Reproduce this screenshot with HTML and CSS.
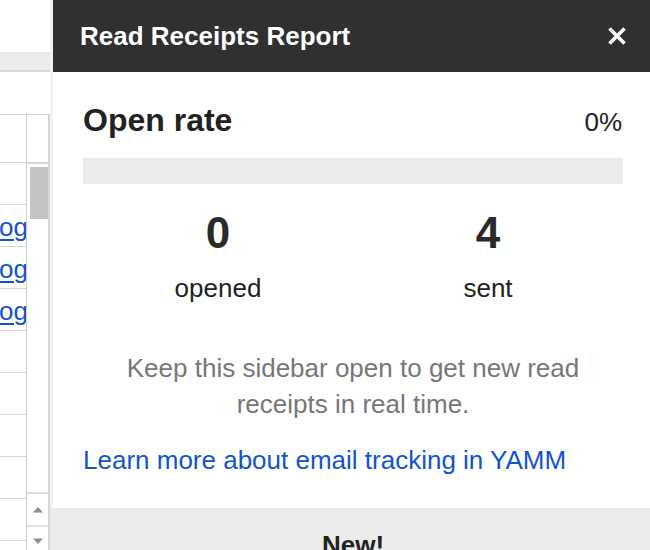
FILE: index.html
```html
<!DOCTYPE html>
<html>
<head>
<meta charset="utf-8">
<title>Read Receipts Report</title>
<link rel="stylesheet" href="styles.css">
</head>
<body>
<div class="page">
  <div class="sheet">
    <div class="toolbar"></div>
    <div class="dots"></div>
    <div class="formula"></div>
    <div class="colhead"></div>
    <div class="grid">
      <div class="cells">
        <div class="cell head"></div>
        <div class="cell"></div>
        <div class="cell"><a class="link" href="#">og</a></div>
        <div class="cell"><a class="link" href="#">og</a></div>
        <div class="cell"><a class="link" href="#">og</a></div>
        <div class="cell"></div>
        <div class="cell"></div>
        <div class="cell"></div>
        <div class="cell"></div>
        <div class="cell"></div>
        <div class="cell"></div>
      </div>
      <div class="vscroll">
        <div class="vs-head"></div>
        <div class="vs-track"><div class="vs-thumb"></div></div>
        <div class="vs-btn up">
          <svg width="12" height="7" viewBox="0 0 12 7"><path d="M1 6.5 L6 1 L11 6.5 Z" fill="#8e8e8e"/></svg>
        </div>
        <div class="vs-btn down">
          <svg width="12" height="7" viewBox="0 0 12 7"><path d="M1 0.5 L6 6 L11 0.5 Z" fill="#8e8e8e"/></svg>
        </div>
      </div>
    </div>
  </div>

  <div class="sidebar">
    <div class="sb-header">
      <div class="sb-title">Read Receipts Report</div>
      <svg class="close" width="20" height="20" viewBox="0 0 20 20">
        <path d="M2.5 2.5 L17.5 17.5 M17.5 2.5 L2.5 17.5" stroke="#ffffff" stroke-width="3.6" fill="none"/>
      </svg>
    </div>
    <div class="sb-body">
      <div class="rate-row">
        <div class="rate-label">Open rate</div>
        <div class="rate-value">0%</div>
      </div>
      <div class="bar"><div class="bar-fill" style="width:0%"></div></div>
      <div class="stats">
        <div class="stat">
          <div class="stat-num">0</div>
          <div class="stat-label">opened</div>
        </div>
        <div class="stat">
          <div class="stat-num">4</div>
          <div class="stat-label">sent</div>
        </div>
      </div>
      <p class="hint">Keep this sidebar open to get new read receipts in real time.</p>
      <a class="learn" href="#">Learn more about email tracking in YAMM</a>
    </div>
    <div class="sb-footer">
      <div class="new">New!</div>
    </div>
  </div>
</div>
</body>
</html>
```

FILE: styles.css
```css
html, body {
  margin: 0;
  padding: 0;
  background: #ffffff;
}

body {
  font-family: "Liberation Sans", Arial, Helvetica, sans-serif;
  color: #222222;
  width: 650px;
  height: 550px;
  overflow: hidden;
}

.page {
  display: flex;
  width: 650px;
  height: 550px;
  overflow: hidden;
}

/* ---------- spreadsheet fragment ---------- */
.sheet {
  width: 50px;
  flex: none;
  display: flex;
  flex-direction: column;
  height: 550px;
  overflow: hidden;
}

.sheet > div {
  flex: none;
}

.toolbar {
  height: 52px;
  background: #ffffff;
}

.dots {
  height: 5px;
  background-color: #ffffff;
  background-image: repeating-conic-gradient(#dcdcdc 0 25%, #f4f4f4 0 50%);
  background-size: 2px 2px;
}

.formula {
  height: 13px;
  background: #ececec;
  border-bottom: 2px solid #d8d8d8;
}

.colhead {
  height: 42px;
  border-bottom: 1px solid #d0d0d0;
}

.grid {
  display: flex;
  align-items: flex-start;
  height: 435px;
  overflow: hidden;
}

.cells {
  width: 26px;
  flex: none;
  border-right: 1px solid #d0d0d0;
  display: flex;
  flex-direction: column;
}

.cell {
  flex: none;
  box-sizing: border-box;
  height: 42px;
  border-bottom: 1px solid #d6d6d6;
  overflow: hidden;
  white-space: nowrap;
  padding-top: 9px;
  font-size: 26px;
  line-height: 26px;
}

.cell.head {
  height: 48px;
}

.link {
  color: #1155cc;
  text-decoration: underline;
  text-decoration-thickness: 2px;
  text-underline-offset: 3px;
  margin-left: -1px;
}

.vscroll {
  width: 21px;
  flex: none;
  border-right: 2px solid #d6d6d6;
  display: flex;
  flex-direction: column;
}

.vscroll > div {
  flex: none;
}

.vs-head {
  height: 47px;
  border-bottom: 1px solid #d0d0d0;
}

.vs-track {
  height: 331px;
  padding-top: 3px;
  box-sizing: border-box;
  border-top: 1px solid #d9d9d9;
  border-bottom: 2px solid #dcdcdc;
}

.vs-thumb {
  width: 18px;
  height: 52px;
  margin-left: 3px;
  background: #c4c4c4;
}

.vs-btn {
  display: flex;
  align-items: center;
  justify-content: center;
}

.vs-btn.up {
  height: 31px;
  border-bottom: 2px solid #e2e2e2;
}

.vs-btn.down {
  height: 28px;
  align-items: flex-start;
  padding-top: 11px;
  box-sizing: border-box;
}

/* ---------- sidebar ---------- */
.sidebar {
  width: 600px;
  flex: none;
  display: flex;
  flex-direction: column;
  background: #f2f2f2;
  height: 550px;
}

.sb-header {
  margin-left: 3px;
  height: 72px;
  background: #303030;
  display: flex;
  align-items: center;
  justify-content: space-between;
  padding: 0 23px 0 27px;
  flex: none;
}

.sb-title {
  color: #ffffff;
  font-weight: bold;
  font-size: 26px;
  line-height: 30px;
}

.close {
  display: block;
  flex: none;
}

.sb-body {
  margin-left: 3px;
  background: #ffffff;
  padding: 30px 27px 30px 30px;
  flex: none;
}

.rate-row {
  display: flex;
  justify-content: space-between;
  align-items: baseline;
  height: 36px;
}

.rate-label {
  font-size: 32px;
  line-height: 36px;
  font-weight: bold;
  color: #222222;
}

.rate-value {
  font-size: 26px;
  line-height: 36px;
  color: #222222;
  padding-right: 1px;
}

.bar {
  margin-top: 20px;
  height: 26px;
  background: #ebebeb;
}

.bar-fill {
  height: 100%;
  background: #4d90fe;
}

.stats {
  display: grid;
  grid-template-columns: 1fr 1fr;
  margin-top: 24px;
  text-align: center;
}

.stat-num {
  font-size: 44px;
  line-height: 50px;
  font-weight: bold;
  color: #2a2a2a;
}

.stat-label {
  margin-top: 15px;
  font-size: 26px;
  line-height: 30px;
  color: #222222;
}

.hint {
  margin: 47px 0 0 0;
  padding: 0 40px;
  text-align: center;
  font-size: 26px;
  line-height: 36px;
  color: #777777;
}

.learn {
  display: block;
  margin-top: 20px;
  font-size: 26px;
  line-height: 36px;
  color: #1155cc;
  text-decoration: none;
}

.sb-footer {
  flex: 1;
  background: #ececec;
  padding: 19px 27px 0 33px;
}

.new {
  text-align: center;
  font-weight: bold;
  font-size: 26px;
  line-height: 36px;
  color: #222222;
}
```
